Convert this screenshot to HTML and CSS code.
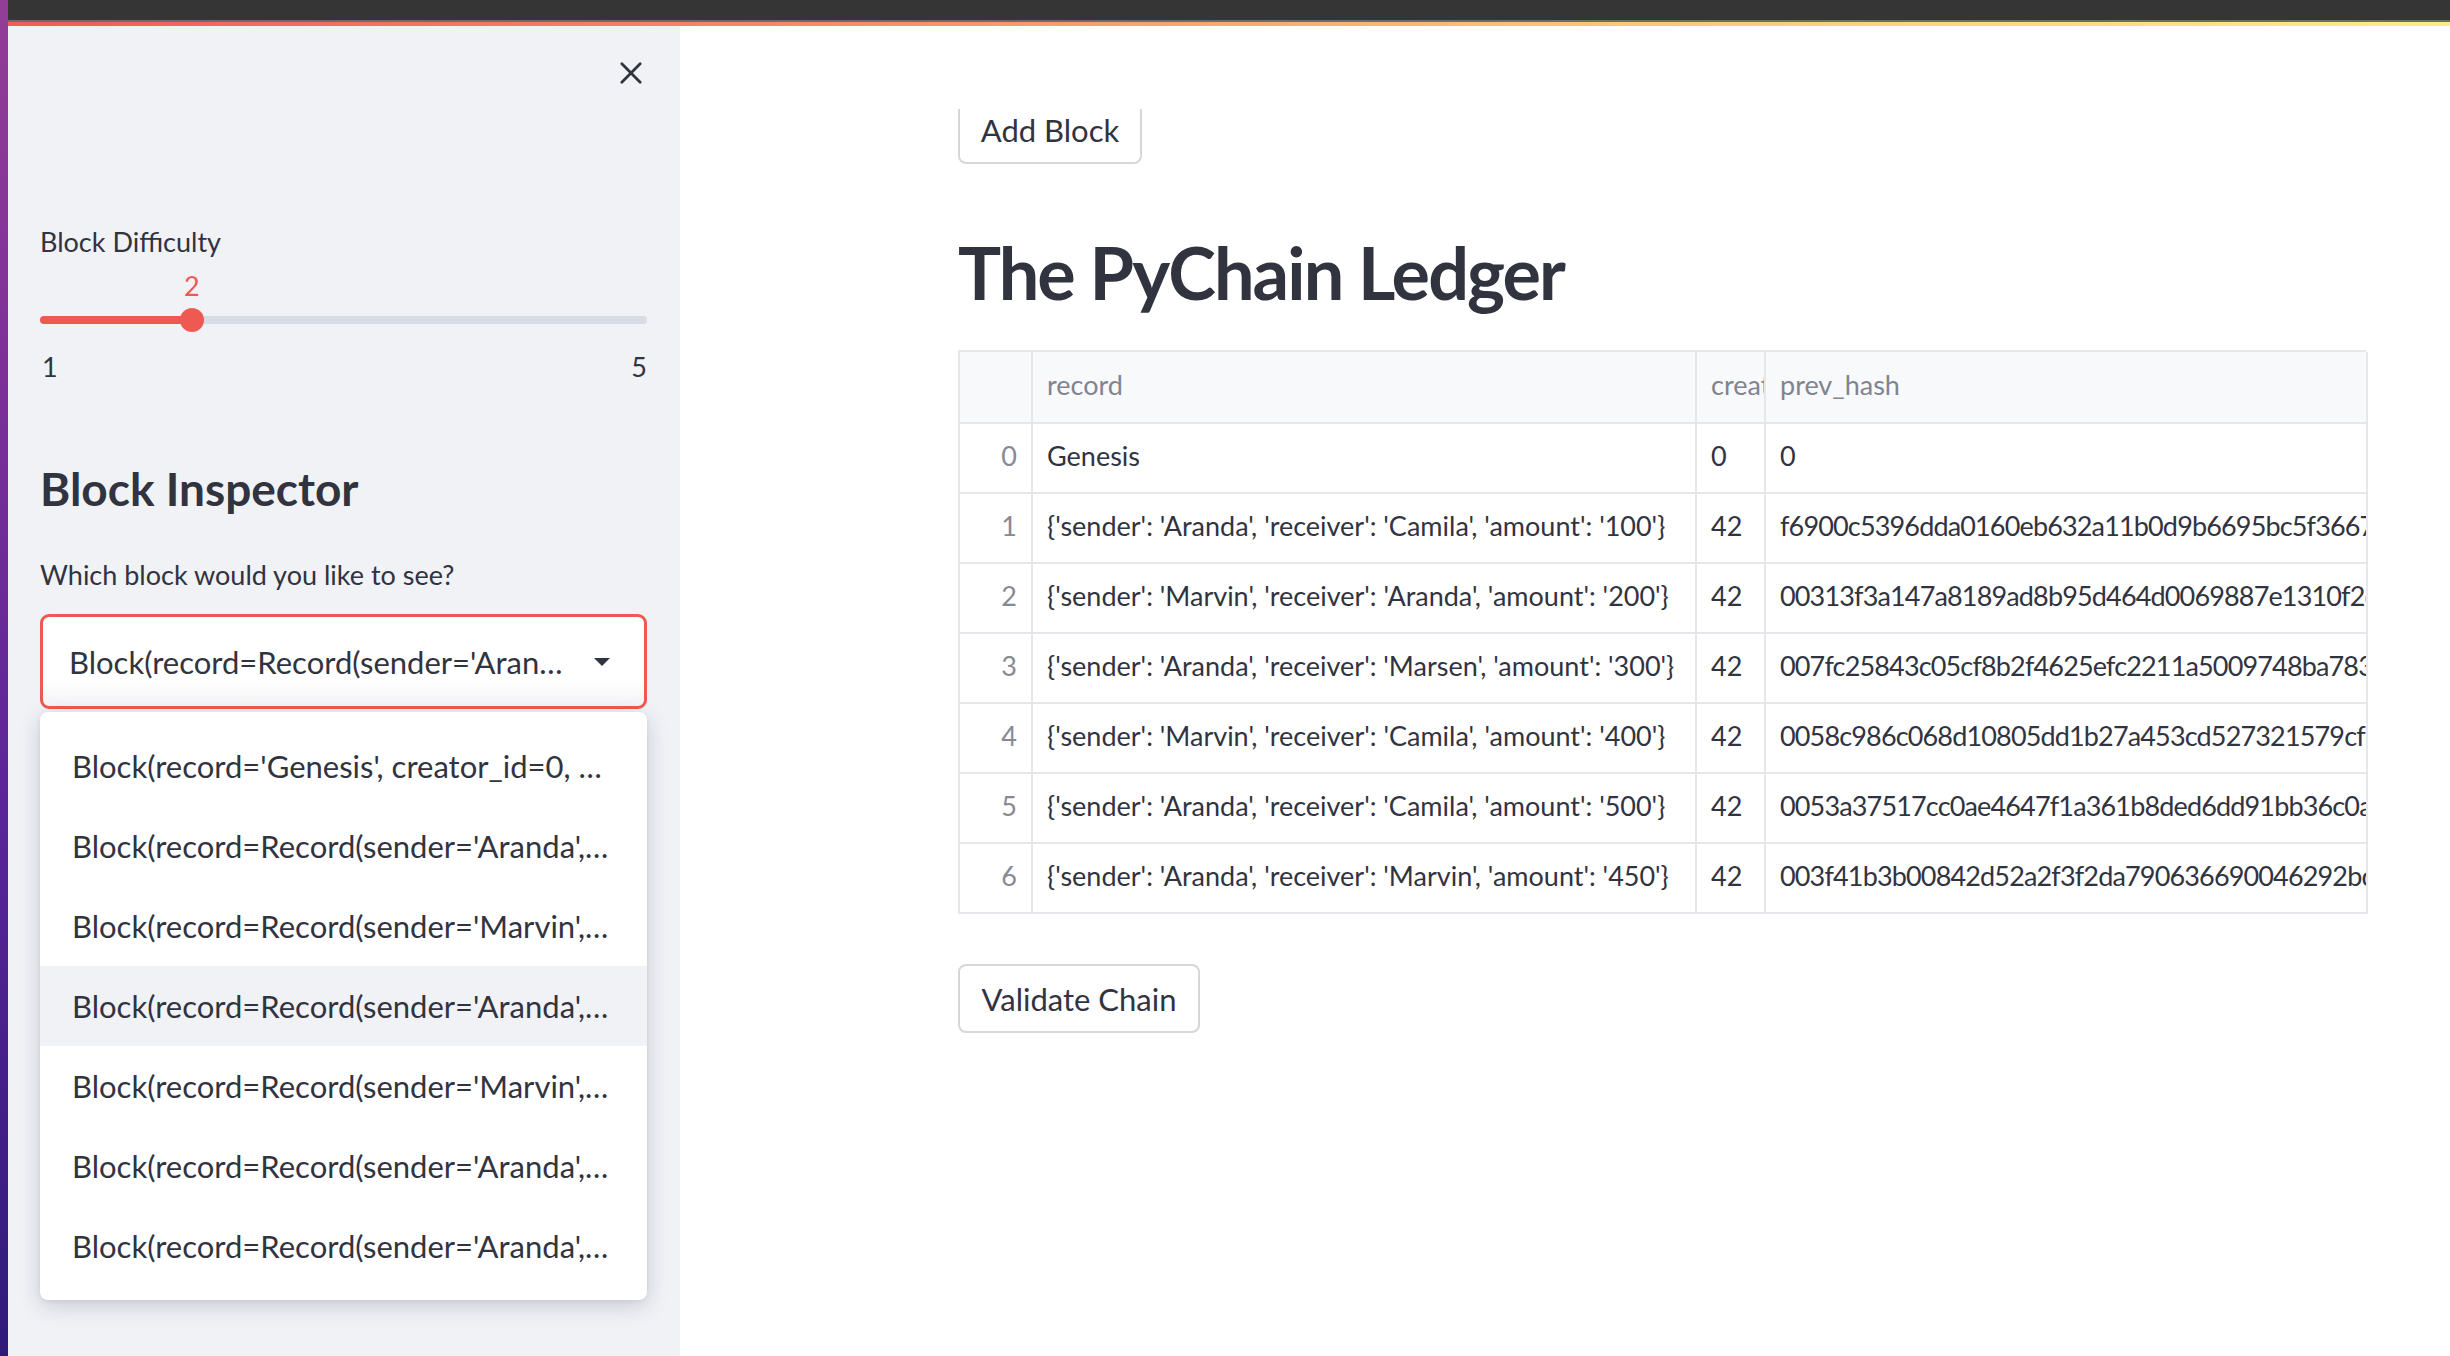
FILE: index.html
```html
<!DOCTYPE html>
<html lang="en">
<head>
<meta charset="utf-8">
<title>PyChain</title>
<link rel="stylesheet" href="styles.css">
</head>
<body>
<div class="desktop-edge"></div>
<div class="window">
  <div class="titlebar"></div>
  <div class="decoration"></div>
  <div class="app">
    <aside class="sidebar">
      <div class="sb-top">
        <button class="close-btn" aria-label="Close sidebar">
          <svg width="24" height="24" viewBox="0 0 24 24"><path d="M2 2 L22 22 M22 2 L2 22" stroke="#31333f" stroke-width="3" stroke-linecap="round" fill="none"/></svg>
        </button>
      </div>
      <div class="widget-label first">Block Difficulty</div>
      <div class="slider">
        <div class="slider-value-row">
          <span class="slider-value" style="left: 25%">2</span>
        </div>
        <div class="slider-track-area">
          <div class="slider-track">
            <div class="slider-fill" style="width: 25%"></div>
          </div>
          <div class="slider-thumb" style="left: 25%"></div>
        </div>
        <div class="slider-ticks"><span>1</span><span>5</span></div>
      </div>
      <h2 class="sb-heading">Block Inspector</h2>
      <div class="widget-label">Which block would you like to see?</div>
      <div class="select-wrap">
        <div class="select-box">
          <span class="select-text">Block(record=Record(sender='Aran…</span>
          <svg class="caret" width="16" height="8" viewBox="0 0 16 8"><path d="M0 0 H16 L8 8 Z" fill="#31333f"/></svg>
        </div>
        <ul class="menu">
          <li>Block(record='Genesis', creator_id=0, …</li>
          <li>Block(record=Record(sender='Aranda',…</li>
          <li>Block(record=Record(sender='Marvin',…</li>
          <li class="active">Block(record=Record(sender='Aranda',…</li>
          <li>Block(record=Record(sender='Marvin',…</li>
          <li>Block(record=Record(sender='Aranda',…</li>
          <li>Block(record=Record(sender='Aranda',…</li>
        </ul>
      </div>
    </aside>
    <main class="main">
      <div class="header-overlay"></div>
      <div class="block">
        <button class="btn add-btn">Add Block</button>
        <h1 class="title">The PyChain Ledger</h1>
        <div class="grid">
          <div class="cell head idx"></div>
          <div class="cell head">record</div>
          <div class="cell head">creator_id</div>
          <div class="cell head">prev_hash</div>

          <div class="cell idx">0</div>
          <div class="cell">Genesis</div>
          <div class="cell">0</div>
          <div class="cell hash">0</div>

          <div class="cell idx">1</div>
          <div class="cell">{'sender': 'Aranda', 'receiver': 'Camila', 'amount': '100'}</div>
          <div class="cell">42</div>
          <div class="cell hash">f6900c5396dda0160eb632a11b0d9b6695bc5f36672a0e1d4f</div>

          <div class="cell idx">2</div>
          <div class="cell">{'sender': 'Marvin', 'receiver': 'Aranda', 'amount': '200'}</div>
          <div class="cell">42</div>
          <div class="cell hash">00313f3a147a8189ad8b95d464d0069887e1310f2d4c8a9b17</div>

          <div class="cell idx">3</div>
          <div class="cell">{'sender': 'Aranda', 'receiver': 'Marsen', 'amount': '300'}</div>
          <div class="cell">42</div>
          <div class="cell hash">007fc25843c05cf8b2f4625efc2211a5009748ba78315e2c0d</div>

          <div class="cell idx">4</div>
          <div class="cell">{'sender': 'Marvin', 'receiver': 'Camila', 'amount': '400'}</div>
          <div class="cell">42</div>
          <div class="cell hash">0058c986c068d10805dd1b27a453cd527321579cf1b3a07e92</div>

          <div class="cell idx">5</div>
          <div class="cell">{'sender': 'Aranda', 'receiver': 'Camila', 'amount': '500'}</div>
          <div class="cell">42</div>
          <div class="cell hash">0053a37517cc0ae4647f1a361b8ded6dd91bb36c0a7e5d21f4</div>

          <div class="cell idx">6</div>
          <div class="cell">{'sender': 'Aranda', 'receiver': 'Marvin', 'amount': '450'}</div>
          <div class="cell">42</div>
          <div class="cell hash">003f41b3b00842d52a2f3f2da790636690046292bd9e1c7a53</div>
        </div>
        <button class="btn validate-btn">Validate Chain</button>
      </div>
    </main>
  </div>
</div>
</body>
</html>
```
FILE: styles.css
```css
* { box-sizing: border-box; }

html, body {
  margin: 0;
  padding: 0;
  width: 2450px;
  height: 1356px;
  overflow: hidden;
  background: #ffffff;
  font-family: "Lato", "Open Sans", sans-serif;
  color: #31333f;
}

body {
  display: flex;
}

.desktop-edge {
  width: 8px;
  height: 1356px;
  flex: none;
  background: linear-gradient(180deg, #933e96 0%, #7a2f98 30%, #5a2598 60%, #2f1a7a 100%);
}

.window {
  flex: 1;
  display: flex;
  flex-direction: column;
  height: 1356px;
}

.titlebar {
  height: 20px;
  background: #353535;
  flex: none;
}

.decoration {
  height: 6px;
  flex: none;
  border-top: 2px solid #6c6c6c;
  background: linear-gradient(90deg, #ef5d57 0%, #f48f66 35%, #fbc578 65%, #feec8c 100%);
}

.app {
  flex: 1;
  display: flex;
  min-height: 0;
}

/* ---------- Sidebar ---------- */
.sidebar {
  width: 672px;
  flex: none;
  background: #f0f2f6;
  padding: 0 33px 0 32px;
  display: flex;
  flex-direction: column;
}

.sb-top {
  height: 94px;
  display: flex;
  justify-content: flex-end;
  align-items: center;
}

.close-btn {
  width: 40px;
  height: 40px;
  margin-right: -4px;
  border: none;
  background: transparent;
  padding: 0;
  display: flex;
  align-items: center;
  justify-content: center;
}

.close-btn svg { width: 22px; height: 22px; }

.widget-label {
  font-size: 27px;
  line-height: 40px;
  height: 40px;
  white-space: nowrap;
}

.widget-label.first { margin-top: 102px; }

.slider {
  margin-top: 4px;
}

.slider-value-row {
  position: relative;
  height: 40px;
}

.slider-value {
  position: absolute;
  top: 0;
  transform: translateX(-50%);
  color: #ee5a52;
  font-size: 27px;
  line-height: 40px;
}

.slider-track-area {
  position: relative;
  height: 24px;
  margin-top: 2px;
  display: flex;
  align-items: center;
}

.slider-track {
  width: 100%;
  height: 8px;
  border-radius: 4px;
  background: #d9dce4;
  overflow: hidden;
}

.slider-fill {
  height: 100%;
  background: #ee5a52;
}

.slider-thumb {
  position: absolute;
  top: 0;
  width: 24px;
  height: 24px;
  border-radius: 50%;
  background: #ee5a52;
  transform: translateX(-50%);
}

.slider-ticks {
  margin-top: 15px;
  display: flex;
  justify-content: space-between;
  font-size: 27px;
  line-height: 40px;
  padding: 0 0 0 2px;
}

.sb-heading {
  margin: 72px 0 0;
  font-size: 46px;
  font-weight: 700;
  line-height: 60px;
  height: 60px;
}

.sb-heading + .widget-label { margin-top: 36px; }

.select-wrap {
  position: relative;
  margin-top: 19px;
}

.select-box {
  height: 95px;
  border: 3px solid #ee5a52;
  border-radius: 9px;
  background: linear-gradient(180deg, #ffffff 0%, #ffffff 70%, #f4f4f6 100%);
  display: flex;
  align-items: center;
  padding: 0 34px 0 26px;
  justify-content: space-between;
}

.select-text {
  font-size: 31px;
  white-space: nowrap;
}

.caret { flex: none; }

.menu {
  position: absolute;
  top: calc(100% + 3px);
  left: 0;
  right: 0;
  margin: 0;
  padding: 14px 0;
  list-style: none;
  background: #ffffff;
  border-radius: 8px;
  box-shadow: 0 6px 22px rgba(30, 35, 60, 0.18), 0 1px 4px rgba(30, 35, 60, 0.08);
}

.menu li {
  height: 80px;
  line-height: 80px;
  padding-left: 32px;
  font-size: 31px;
  white-space: nowrap;
}

.menu li.active { background: #f0f2f6; }

/* ---------- Main ---------- */
.main {
  flex: 1;
  position: relative;
  padding: 69px 0 0 278px;
  background: #ffffff;
}

.header-overlay {
  position: absolute;
  top: 0;
  left: 0;
  right: 0;
  height: 83px;
  background: #ffffff;
  z-index: 2;
}

.block {
  width: 1408px;
  display: flex;
  flex-direction: column;
  align-items: flex-start;
}

.btn {
  font-family: inherit;
  font-size: 31px;
  color: #31333f;
  background: #ffffff;
  border: 2px solid #d6d7db;
  border-radius: 8px;
  height: 69px;
  padding: 0;
  white-space: nowrap;
  text-align: center;
}

.add-btn { width: 184px; }

.validate-btn {
  width: 242px;
  margin-top: 50px;
}

.title {
  margin: 58px 0 3px;
  font-size: 72px;
  font-weight: 700;
  line-height: 100px;
  height: 100px;
  letter-spacing: -1.9px;
  white-space: nowrap;
}

.grid {
  margin-top: 25px;
  width: 1408px;
  display: grid;
  grid-template-columns: 73px 664px 69px 602px;
  grid-template-rows: 72px repeat(7, 70px);
  border-top: 2px solid #e6e7eb;
  border-left: 2px solid #e6e7eb;
}

.cell {
  border-right: 2px solid #e6e7eb;
  border-bottom: 2px solid #e6e7eb;
  padding: 0 0 5px 14px;
  font-size: 27px;
  white-space: nowrap;
  overflow: hidden;
  display: flex;
  align-items: center;
}

.cell.hash { letter-spacing: -0.85px; }

.cell.head {
  background: #f8f9fb;
  color: #818390;
}

.cell.idx {
  justify-content: flex-end;
  padding: 0 14px 5px 0;
  color: #878994;
}
```
